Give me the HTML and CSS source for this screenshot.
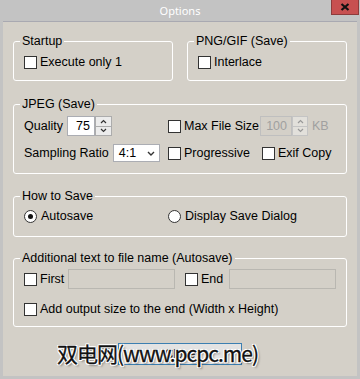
FILE: index.html
```html
<!DOCTYPE html>
<html lang="en">
<head>
    <meta charset="UTF-8">
    <title>Options</title>
    <link rel="stylesheet" href="styles.css">
</head>
<body>
    <div class="window">
        <div class="titlebar">
            <span class="title">Options</span>
            <span class="close">
                <svg width="10" height="8" viewBox="0 0 10 8"><path d="M1.5 1 L8.5 7 M8.5 1 L1.5 7" stroke="#111" stroke-width="2.2" fill="none"/></svg>
            </span>
        </div>

        <div class="client">
            <div class="top-row">
                <fieldset class="group group-top">
                    <legend>Startup</legend>
                    <div class="row">
                        <label class="check"><span class="box"></span>Execute only 1</label>
                    </div>
                </fieldset>
                <fieldset class="group group-top">
                    <legend>PNG/GIF (Save)</legend>
                    <div class="row">
                        <label class="check"><span class="box"></span>Interlace</label>
                    </div>
                </fieldset>
            </div>

            <fieldset class="group group-jpeg">
                <legend>JPEG (Save)</legend>
                <div class="jpeg-grid">
                    <div class="cell">
                        <span class="field-label">Quality</span>
                        <div class="spin">
                            <span class="spin-input">75</span>
                            <span class="spin-btns">
                                <span class="spin-btn"><svg width="7" height="5" viewBox="0 0 7 5"><polyline points="1,4 3.5,1.5 6,4" stroke="#333" stroke-width="1.2" fill="none"/></svg></span>
                                <span class="spin-btn"><svg width="7" height="5" viewBox="0 0 7 5"><polyline points="1,1 3.5,3.5 6,1" stroke="#333" stroke-width="1.2" fill="none"/></svg></span>
                            </span>
                        </div>
                    </div>
                    <div class="cell">
                        <label class="check w-max"><span class="box"></span>Max File Size</label>
                        <div class="spin disabled">
                            <span class="spin-input wide">100</span>
                            <span class="spin-btns">
                                <span class="spin-btn"><svg width="7" height="5" viewBox="0 0 7 5"><polyline points="1,4 3.5,1.5 6,4" stroke="#999" stroke-width="1.2" fill="none"/></svg></span>
                                <span class="spin-btn"><svg width="7" height="5" viewBox="0 0 7 5"><polyline points="1,1 3.5,3.5 6,1" stroke="#999" stroke-width="1.2" fill="none"/></svg></span>
                            </span>
                        </div>
                        <span class="unit">KB</span>
                    </div>
                    <div class="cell">
                        <span class="field-label">Sampling Ratio</span>
                        <div class="select">
                            <span>4:1</span>
                            <svg width="8" height="5" viewBox="0 0 8 5"><polyline points="1,1 4,4 7,1" stroke="#333" stroke-width="1.4" fill="none"/></svg>
                        </div>
                    </div>
                    <div class="cell">
                        <label class="check w-prog"><span class="box"></span>Progressive</label>
                        <label class="check"><span class="box"></span>Exif Copy</label>
                    </div>
                </div>
            </fieldset>

            <fieldset class="group group-how">
                <legend>How to Save</legend>
                <div class="how-grid">
                    <label class="radio"><span class="dot on"></span>Autosave</label>
                    <label class="radio"><span class="dot"></span>Display Save Dialog</label>
                </div>
            </fieldset>

            <fieldset class="group group-extra">
                <legend>Additional text to file name (Autosave)</legend>
                <div class="extra-row">
                    <label class="check w-name"><span class="box"></span>First</label>
                    <span class="text-input"></span>
                    <label class="check w-name gap-end"><span class="box"></span>End</label>
                    <span class="text-input"></span>
                </div>
                <div class="row extra-second">
                    <label class="check"><span class="box"></span>Add output size to the end (Width x Height)</label>
                </div>
            </fieldset>

            <div class="actions">
                <button class="btn">Close</button>
                <div class="watermark">双电网(www.pcpc.me)</div>
            </div>
        </div>
    </div>
</body>
</html>
```

FILE: styles.css
```css
body {
    margin: 0;
    font-family: "Liberation Sans", Arial, sans-serif;
    font-size: 12.5px;
    color: #000;
}
.window {
    width: 360px;
    height: 379px;
    background: #c3c3c3;
    display: flex;
    flex-direction: column;
}
.titlebar {
    height: 21px;
    display: grid;
    grid-template-columns: 1fr auto 1fr;
    align-items: center;
}
.title {
    grid-column: 2;
    color: #fff;
    font-family: "Noto Sans", sans-serif;
    font-size: 11px;
}
.close {
    grid-column: 3;
    justify-self: end;
    align-self: start;
    width: 28px;
    height: 15px;
    box-sizing: border-box;
    margin-right: 1px;
    background: #c75050;
    border: 1px solid #8d3b3b;
    border-top: 0;
    display: flex;
    align-items: center;
    justify-content: center;
}
.client {
    flex: 1;
    margin: 0 3px 3px;
    background: #d4d0c8;
    border-top: 1px solid #a9a9b1;
    padding: 12px 10px 0;
}
.top-row {
    display: grid;
    grid-template-columns: 1fr 1fr;
    gap: 14px;
}
.group {
    margin: 0;
    padding: 0 10px;
    border: 1px solid #fff;
    border-radius: 3px;
    min-width: 0;
}
.group legend {
    padding: 0 2px;
    margin-left: -4px;
    line-height: 15px;
}
.group-top {
    padding-top: 5px;
    padding-bottom: 10px;
}
.group-jpeg {
    margin-top: 16px;
    padding-top: 4px;
    padding-bottom: 10px;
}
.group-how {
    margin-top: 15px;
    padding-top: 4px;
    padding-bottom: 12px;
}
.group-extra {
    margin-top: 14px;
    padding-top: 3px;
    padding-bottom: 9px;
}
.row {
    height: 16px;
    display: flex;
    align-items: center;
}
.check,
.radio {
    display: inline-flex;
    align-items: center;
    white-space: nowrap;
}
.box {
    width: 13px;
    height: 13px;
    box-sizing: border-box;
    border: 1px solid #333;
    background: #fff;
    margin-right: 3px;
}
.dot {
    width: 13px;
    height: 13px;
    box-sizing: border-box;
    border: 1px solid #333;
    border-radius: 50%;
    background: #fff;
    margin-right: 4px;
    display: flex;
    align-items: center;
    justify-content: center;
}
.dot.on::after {
    content: "";
    width: 5px;
    height: 5px;
    border-radius: 50%;
    background: #111;
}

/* JPEG */
.jpeg-grid {
    display: grid;
    grid-template-columns: 144px auto;
    grid-auto-rows: 20px;
    row-gap: 7px;
}
.cell {
    display: flex;
    align-items: center;
}
.field-label {
    margin-right: 4px;
}
.spin {
    display: flex;
    height: 20px;
}
.spin-input {
    width: 28px;
    box-sizing: border-box;
    border: 1px solid #abadb3;
    background: #fff;
    text-align: right;
    padding-right: 4px;
    line-height: 18px;
}
.spin-input.wide {
    width: 32px;
}
.spin-btns {
    width: 17px;
    display: flex;
    flex-direction: column;
}
.spin-btn {
    flex: 1;
    border: 1px solid #acacac;
    background: #ececec;
    display: flex;
    align-items: center;
    justify-content: center;
}
.spin-btn + .spin-btn {
    border-top: 0;
}
.disabled .spin-input {
    background: #d4d0c8;
    border-color: #bfbfbf;
    color: #a0a0a0;
}
.disabled .spin-btns {
    width: 16px;
}
.disabled .spin-btn {
    border-color: #c4c4c4;
    background: #e2e0db;
}
.unit {
    margin-left: 4px;
    color: #a0a0a0;
}
.w-max {
    width: 92px;
}
.w-prog {
    width: 94px;
}
.select {
    width: 47px;
    height: 18px;
    box-sizing: border-box;
    border: 1px solid #abadb3;
    background: #fff;
    display: flex;
    align-items: center;
    justify-content: space-between;
    padding: 0 4px 0 5px;
}

/* How to Save */
.how-grid {
    display: grid;
    grid-template-columns: 144px auto;
    height: 16px;
    align-items: center;
}

/* Additional text */
.extra-row {
    height: 20px;
    display: flex;
    align-items: center;
}
.w-name {
    width: 44px;
}
.gap-end {
    margin-left: 10px;
}
.text-input {
    width: 107px;
    height: 20px;
    box-sizing: border-box;
    border: 1px solid #b9b7b1;
    background: #d4d0c8;
}
.extra-second {
    margin-top: 12px;
}

/* Buttons */
.actions {
    position: relative;
    margin-top: 16px;
    display: flex;
    justify-content: center;
}
.btn {
    width: 124px;
    height: 22px;
    border: 1px solid #3c7fb1;
    background: #e3e3e3;
    font-family: "Liberation Sans", Arial, sans-serif;
    font-size: 12px;
    color: #333;
    padding: 0;
}
.watermark {
    position: absolute;
    left: 44px;
    top: -4px;
    font-family: "Noto Sans CJK SC", sans-serif;
    font-size: 21px;
    line-height: 28px;
    letter-spacing: -1px;
    color: #111;
    white-space: nowrap;
    -webkit-text-stroke: 0.3px #111;
    text-shadow: -1px -1px 0 #fff, 1px -1px 0 #fff, -1px 1px 0 #fff, 1px 1px 0 #fff,
        0 -1px 0 #fff, 0 1px 0 #fff, -1px 0 0 #fff, 1px 0 0 #fff, 2px 2px 2px rgba(0, 0, 0, 0.35);
}
```
